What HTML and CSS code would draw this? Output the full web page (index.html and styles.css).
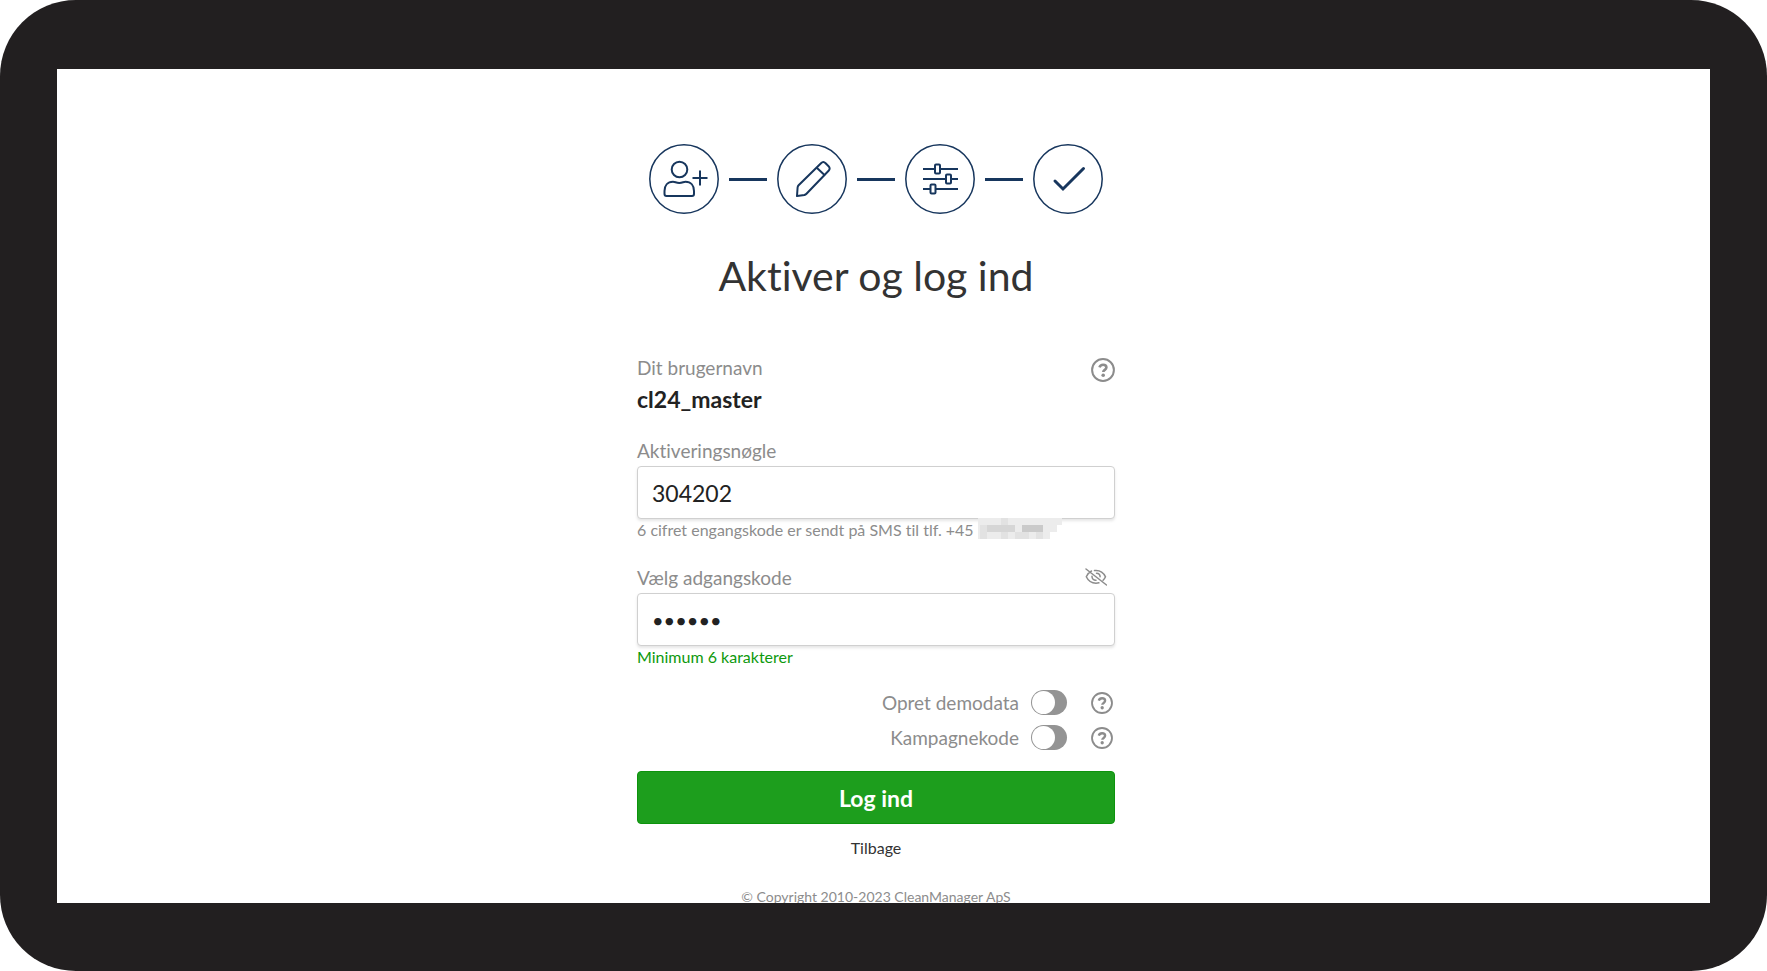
FILE: index.html
```
<!DOCTYPE html>
<html lang="da">
<head>
  <meta charset="UTF-8" />
  <meta name="viewport" content="width=device-width, initial-scale=1.0"/>
  <title>Aktiver og log ind - CleanManager</title>
  <link rel="stylesheet" href="styles.css">
</head>
<body>
  <svg class="symbols" aria-hidden="true">
    <symbol id="help" viewBox="0 0 24 24">
      <circle cx="12" cy="12" r="10.900" fill="none" stroke="currentColor" stroke-width="2"/>
      <path d="M8.500 9.400C9 7.700 10.400 6.800 12.100 6.800c1.900 0 3.300 1.100 3.300 2.800 0 2.300-3.100 2.300-3.100 4.400" fill="none" stroke="currentColor" stroke-width="2.600"/>
      <circle cx="12.200" cy="17.200" r="1.800" fill="currentColor"/>
    </symbol>
  </svg>
  <div class="device">
    <main class="screen">
      <div class="steps">
        <svg class="step" viewBox="0 0 70 70">
          <circle class="ring" cx="35" cy="35" r="34.200"/>
          <circle cx="30.500" cy="25.500" r="7.800"/>
          <path d="M24 37.800c-5.500 0-8.500 3.900-8.500 9.200v3c0 1.200.8 2 2 2h25.500c1.200 0 2-.8 2-2v-3c0-5.300-3-9.200-8.500-9.200-2.200 0-3 1.200-6.200 1.200s-4.100-1.200-6.300-1.200z"/>
          <path d="M51 26.500v15M43.500 34h15"/>
        </svg>
        <span class="line"></span>
        <svg class="step" viewBox="0 0 70 70">
          <circle class="ring" cx="35" cy="35" r="34.200"/>
          <path d="M20 52l.6-8.500c.1-1 .4-1.600 1-2.200L44 19.200c1.400-1.400 3.200-1.400 4.600 0l3 3c1.400 1.400 1.400 3.200 0 4.600L29.500 49.700c-.6.600-1.200.9-2 1.300L20 52z"/>
          <path d="M39.500 23.500l8.500 8"/>
        </svg>
        <span class="line"></span>
        <svg class="step" viewBox="0 0 70 70">
          <circle class="ring" cx="35" cy="35" r="34.200"/>
          <path d="M18 25h12M35 25h18M18 35h23M46 35h7M18 45h7M30.500 45h22.500"/>
          <rect x="30" y="20.500" width="5" height="9" rx="1"/>
          <rect x="41" y="30.500" width="5" height="9" rx="1"/>
          <rect x="25.500" y="40.500" width="5" height="9" rx="1"/>
        </svg>
        <span class="line"></span>
        <svg class="step" viewBox="0 0 70 70">
          <circle class="ring" cx="35" cy="35" r="34.200"/>
          <path class="check" d="M22 37l8 8L50.500 24.500"/>
        </svg>
      </div>

      <h1>Aktiver og log ind</h1>

      <form id="activateForm" autocomplete="off">
        <div class="user-row">
          <div>
            <p class="caption">Dit brugernavn</p>
            <p class="username">cl24_master</p>
          </div>
          <button type="button" class="icon-btn help-lg" aria-label="Hjælp til brugernavn"><svg><use href="#help"/></svg></button>
        </div>

        <div class="field">
          <label for="key">Aktiveringsnøgle</label>
          <input type="text" id="key" value="304202" />
          <p class="hint">6 cifret engangskode er sendt på SMS til tlf. +45
            <svg class="masked" viewBox="0 0 84 21" shape-rendering="crispEdges" aria-hidden="true">
              <path fill="#ececec" d="M0 0h84v7h-5v7h-7v7H0z"/>
              <path fill="#e2e2e2" d="M23 0h7v7h-7zM2 7h7v14H2zM23 14h7v7h-7zM37 14h14v7H37zM58 14h7v7h-7z"/>
              <path fill="#d6d6d6" d="M9 7h28v7H9z"/>
              <path fill="#cacaca" d="M44 7h21v7H44z"/>
            </svg>
          </p>
        </div>

        <div class="field">
          <div class="label-row">
            <label for="password">Vælg adgangskode</label>
            <button type="button" class="icon-btn eye" id="togglePass" aria-label="Vis adgangskode">
              <svg viewBox="0 0 22 18">
                <path d="M1 1l20.500 16M6.500 3C4.300 4.200 2.300 6 1.300 8.800c2 4.200 5.500 6.400 9.700 6.400 1 0 2-.1 2.900-.4M9.500 2.600c5-.6 8.800 1.700 11 6.200-.6 1.400-1.400 2.500-2.400 3.400M7 8.200c-.2 2.600 1.700 4.100 4 4M11.500 5.200c2.100.1 3.600 1.500 3.600 3.600"/>
              </svg>
            </button>
          </div>
          <input type="password" id="password" value="304202" minlength="6" />
          <p class="hint valid">Minimum 6 karakterer</p>
        </div>

        <div class="options">
          <div class="option">
            <label for="demo">Opret demodata</label>
            <input type="checkbox" class="switch" id="demo" />
            <button type="button" class="icon-btn" aria-label="Hjælp til demodata"><svg><use href="#help"/></svg></button>
          </div>
          <div class="option">
            <label for="campaign">Kampagnekode</label>
            <input type="checkbox" class="switch" id="campaign" />
            <button type="button" class="icon-btn" aria-label="Hjælp til kampagnekode"><svg><use href="#help"/></svg></button>
          </div>
        </div>

        <button type="submit" class="submit">Log ind</button>
      </form>
      <a href="#" class="back">Tilbage</a>
      <footer>© Copyright 2010-2023 CleanManager ApS</footer>
    </main>
  </div>
  <script>
    document.getElementById('togglePass').onclick = function() {
      const pass = document.getElementById('password');
      pass.type = pass.type === 'password' ? 'text' : 'password';
    }
    document.getElementById('activateForm').onsubmit = function(e) {
      e.preventDefault();
    }
  </script>
</body>
</html>
```
FILE: styles.css
```
:root {
  --navy: #17365d;
  --green: #1d9e1d;
  --muted: #8c8c8c;
  --frame: #221f20;
}
* { box-sizing: border-box; }
body {
  margin: 0;
  background: #fff;
  color: #222;
  font-family: Lato, 'Open Sans', sans-serif;
  font-variant-ligatures: none;
}
h1, p { margin: 0; }
.symbols { display: none; }
/* Tablet frame */
.device {
  height: 100vh;
  padding: 69px 57px 68px;
  background: var(--frame);
  border-radius: 76px;
}
.screen {
  height: 100%;
  padding: 75px 15px 0 0;
  background: #fff;
  overflow: hidden;
  display: flex;
  flex-direction: column;
  align-items: center;
}
/* Progress steps */
.steps {
  display: flex;
  align-items: center;
  gap: 10px;
}
.step {
  display: block;
  width: 70px;
  height: 70px;
  fill: none;
  stroke: var(--navy);
  stroke-width: 2;
  stroke-linejoin: round;
}
.step .ring { stroke-width: 1.5; }
.step .check { stroke-width: 3; stroke-linecap: round; stroke-linejoin: miter; }
.line {
  width: 38px;
  height: 3px;
  background: var(--navy);
}
h1 {
  margin-top: 36px;
  font-size: 41px;
  line-height: 52px;
  font-weight: 400;
  color: #333;
}
form {
  width: 478px;
  max-width: 95%;
  margin-top: 54px;
}
.user-row {
  display: flex;
  justify-content: space-between;
  align-items: flex-start;
}
.caption, label {
  display: block;
  font-size: 19px;
  line-height: 24px;
  color: var(--muted);
}
.username {
  margin-top: 4px;
  font-size: 23px;
  line-height: 30px;
  font-weight: 700;
}
.field { margin-top: 25px; }
.label-row {
  display: flex;
  justify-content: space-between;
  align-items: center;
}
input[type="text"], input[type="password"] {
  display: block;
  width: 100%;
  height: 53px;
  margin-top: 3px;
  padding: 0 14px;
  border: 1px solid #d0d0d0;
  border-radius: 4px;
  box-shadow: 0 2px 3px rgba(0,0,0,0.1);
  background: #fff;
  color: #222;
  font: 23px Lato, 'Open Sans', sans-serif;
}
input[type="password"] { font-size: 20px; }
input:focus { outline: none; border-color: var(--navy); }
.hint {
  font-size: 16px;
  line-height: 22px;
  color: var(--muted);
  position: relative;
}
.hint.valid { color: #0d990d; }
/* Pixelated phone number, overlaps the input border */
.masked {
  position: absolute;
  left: 341px;
  top: -1px;
  width: 84px;
  height: 21px;
}
.icon-btn {
  padding: 0;
  border: none;
  background: none;
  color: var(--muted);
  cursor: pointer;
}
.icon-btn svg { display: block; width: 22px; height: 22px; }
.help-lg { margin-top: 2px; }
.help-lg svg { width: 24px; height: 24px; }
.icon-btn.eye svg {
  width: 22px;
  height: 18px;
  fill: none;
  stroke: currentColor;
  stroke-width: 1.5;
  stroke-linecap: round;
}
.eye { margin: 0 8px 2px 0; }
.options {
  margin-top: 22px;
  padding-right: 2px;
  display: flex;
  flex-direction: column;
  gap: 10px;
}
.option {
  display: flex;
  justify-content: flex-end;
  align-items: center;
}
.switch {
  appearance: none;
  width: 36px;
  height: 25px;
  margin: 0 24px 0 12px;
  padding: 1px;
  border-radius: 13px;
  background: #949494;
  cursor: pointer;
}
.switch::before {
  content: "";
  display: block;
  width: 23px;
  height: 23px;
  border-radius: 50%;
  background: #fff;
}
.switch:checked { background: var(--green); }
.switch:checked::before { margin-left: auto; }
.submit {
  display: block;
  width: 100%;
  height: 53px;
  margin-top: 21px;
  border: 1px solid #0d930d;
  border-radius: 4px;
  background: var(--green);
  color: #fff;
  font: 700 23px Lato, 'Open Sans', sans-serif;
  cursor: pointer;
}
.back {
  margin-top: 13px;
  font-size: 16px;
  line-height: 22px;
  color: #333;
  text-decoration: none;
}
.back:hover { text-decoration: underline; }
footer {
  margin-top: 28px;
  font-size: 14px;
  line-height: 20px;
  color: var(--muted);
  white-space: nowrap;
}
```
